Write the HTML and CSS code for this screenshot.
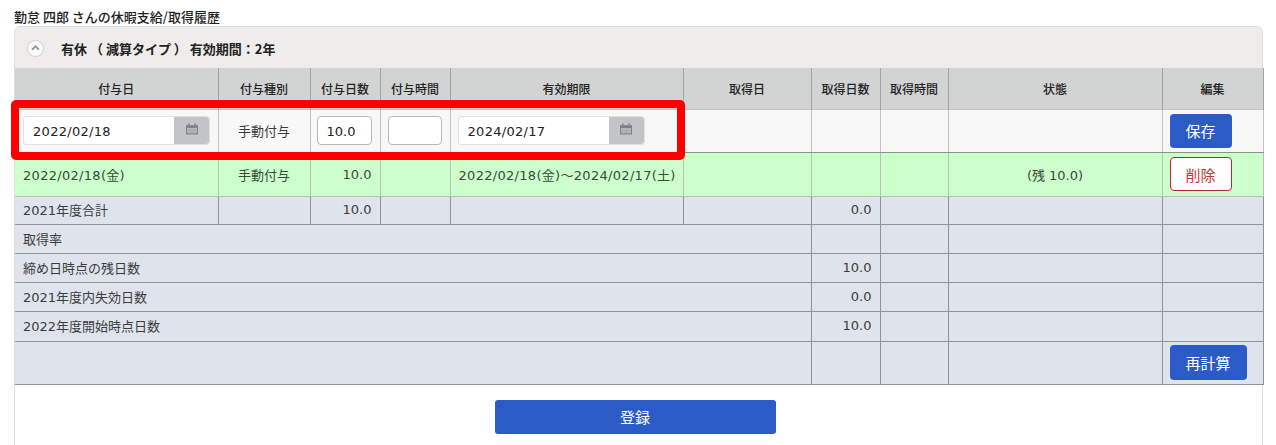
FILE: index.html
```html
<!DOCTYPE html>
<html lang="ja">
<head>
<meta charset="utf-8">
<title>休暇支給/取得履歴</title>
<link rel="stylesheet" href="styles.css">
</head>
<body>
<h1 class="page-title">勤怠 四郎 さんの休暇支給/取得履歴</h1>
<section class="panel">
  <header class="panel-head">
    <span class="toggle">
      <svg viewBox="0 0 16 16" width="16" height="16" aria-hidden="true"><path d="M4.3 9.8 8 6.3l3.7 3.5" fill="none" stroke="#8f8f8f" stroke-width="1.8"/></svg>
    </span>
    <span class="panel-title">有休 （ 減算タイプ ） 有効期間：2年</span>
  </header>
  <div class="table-wrap">
    <table class="grid">
      <colgroup>
        <col class="c1"><col class="c2"><col class="c3"><col class="c4"><col class="c5">
        <col class="c6"><col class="c7"><col class="c8"><col class="c9"><col class="c10">
      </colgroup>
      <thead>
        <tr>
          <th>付与日</th><th>付与種別</th><th>付与日数</th><th>付与時間</th><th>有効期限</th>
          <th>取得日</th><th>取得日数</th><th>取得時間</th><th>状態</th><th>編集</th>
        </tr>
      </thead>
      <tbody>
        <tr class="row-edit">
          <td class="cell-date">
            <div class="date-field"><span class="date-value">2022/02/18</span>
              <span class="date-btn"><svg viewBox="0 0 14 14" width="14" height="14" aria-hidden="true"><path d="M1 3.2h12v9.3H1z" fill="#7f8285"/><path d="M3 1.6h1.6v2H3zM9.4 1.6H11v2H9.4z" fill="#7f8285"/><path d="M2.2 6h9.6v5.3H2.2z" fill="#c2c4c6"/><path d="M3 7h8M3 8.6h8M3 10.2h8" stroke="#8e9093" stroke-width=".6"/></svg></span>
            </div>
          </td>
          <td class="center">手動付与</td>
          <td class="cell-input"><div class="num-field">10.0</div></td>
          <td class="cell-input"><div class="num-field"></div></td>
          <td class="cell-date">
            <div class="date-field"><span class="date-value">2024/02/17</span>
              <span class="date-btn"><svg viewBox="0 0 14 14" width="14" height="14" aria-hidden="true"><path d="M1 3.2h12v9.3H1z" fill="#7f8285"/><path d="M3 1.6h1.6v2H3zM9.4 1.6H11v2H9.4z" fill="#7f8285"/><path d="M2.2 6h9.6v5.3H2.2z" fill="#c2c4c6"/><path d="M3 7h8M3 8.6h8M3 10.2h8" stroke="#8e9093" stroke-width=".6"/></svg></span>
            </div>
          </td>
          <td></td><td></td><td></td><td></td>
          <td class="cell-btn"><button class="btn btn-primary btn-save" type="button">保存</button></td>
        </tr>
        <tr class="row-grant">
          <td class="dt">2022/02/18(金)</td><td class="center">手動付与</td><td class="num">10.0</td><td></td>
          <td class="dt">2022/02/18(金)～2024/02/17(土)</td><td></td><td></td><td></td>
          <td class="center">(残 10.0)</td>
          <td class="cell-btn"><button class="btn btn-danger" type="button">削除</button></td>
        </tr>
        <tr class="row-sum row-total">
          <td>2021年度合計</td><td></td><td class="num">10.0</td><td></td><td></td><td></td>
          <td class="num">0.0</td><td></td><td></td><td></td>
        </tr>
        <tr class="row-sum">
          <td colspan="6">取得率</td><td></td><td></td><td></td><td></td>
        </tr>
        <tr class="row-sum">
          <td colspan="6">締め日時点の残日数</td><td class="num">10.0</td><td></td><td></td><td></td>
        </tr>
        <tr class="row-sum">
          <td colspan="6">2021年度内失効日数</td><td class="num">0.0</td><td></td><td></td><td></td>
        </tr>
        <tr class="row-sum row-start">
          <td colspan="6">2022年度開始時点日数</td><td class="num">10.0</td><td></td><td></td><td></td>
        </tr>
        <tr class="row-sum row-last">
          <td colspan="6"></td><td></td><td></td><td></td>
          <td class="cell-btn"><button class="btn btn-primary btn-calc" type="button">再計算</button></td>
        </tr>
      </tbody>
    </table>
    <div class="highlight"></div>
  </div>
  <div class="actions"><button class="btn btn-primary btn-submit" type="button">登録</button></div>
</section>
</body>
</html>
```
FILE: styles.css
```css
* { box-sizing: border-box; }
html, body { margin: 0; height: 445px; overflow: hidden; background: #fff; }
body {
  padding: 9px 13px 0 14px;
  font-family: "DejaVu Sans", "Noto Sans CJK JP", sans-serif;
  font-size: 13px;
  color: #3c3c3c;
}
.page-title {
  margin: 0 0 2px;
  height: 15px;
  font-size: 13px;
  line-height: 15px;
  font-weight: 500;
  color: #222;
  font-family: "Noto Sans CJK JP", sans-serif;
}
.panel {
  border: 1px solid #dedede;
  border-radius: 6px 6px 0 0;
  height: 425px;
}
.panel-head {
  display: flex;
  align-items: center;
  height: 41px;
  padding: 1px 0 0 12px;
  background: #eeedec;
  border-radius: 5px 5px 0 0;
}
.toggle {
  display: flex;
  width: 17px;
  height: 17px;
  border-radius: 50%;
  background: #fafafa;
  border: 1px solid #d0d0d0;
  align-items: center;
  justify-content: center;
}
.panel-title {
  margin-left: 17px;
  font-size: 13px;
  font-weight: 700;
  color: #222;
  font-family: "Noto Sans CJK JP", sans-serif;
  white-space: pre;
}
.table-wrap { position: relative; }
.grid {
  width: 1248px;
  border-collapse: collapse;
  table-layout: fixed;
}
.c1 { width: 203px; }
.c2 { width: 92px; }
.c3 { width: 70px; }
.c4 { width: 70px; }
.c5 { width: 233px; }
.c6 { width: 128px; }
.c7 { width: 69px; }
.c8 { width: 68px; }
.c9 { width: 214px; }
.c10 { width: 101px; }
.grid th {
  height: 41px;
  padding: 0;
  background: #d2d4d4;
  border-left: 1px solid #a4a6a6;
  border-right: 1px solid #a4a6a6;
  font-family: "Noto Sans CJK JP", sans-serif;
  font-size: 12px;
  font-weight: 500;
  color: #222;
}
.grid th:first-child, .grid td:first-child { border-left: 0; }
.grid td {
  padding: 0 8px;
  border: 1px solid #909396;
  white-space: nowrap;
}
.center { text-align: center; }
.grid .num { text-align: right; }
.dt { letter-spacing: .3px; }
.row-edit td { height: 43px; background: #f8f8f8; border-color: #c2c2c2; border-bottom-color: #7f9a7f; }
.grid .cell-date { padding: 0 7px; }
.grid .cell-date:first-child { padding-left: 8px; }
.grid .cell-input { padding: 0 6px; }
.grid .cell-input + .cell-input { padding-left: 7px; }
.row-grant td { height: 44px; background: #ccffcc; border-color: #b4c4b4; color: #3a4a3a; }
.grid .row-sum td { height: 29px; padding-bottom: 1px; background: #dfe4ec; }
.grid .row-total td { height: 28px; }
.grid .row-start td { height: 30px; }
.grid .row-last td { height: 43px; padding-bottom: 0; }
.date-field {
  display: flex;
  width: 187px;
  height: 29px;
  border: 1px solid #e2e2e2;
  border-radius: 3px;
  background: #fff;
}
.date-value {
  flex: 1;
  padding-left: 9px;
  line-height: 30px;
  letter-spacing: .3px;
  color: #222;
}
.date-btn {
  display: flex;
  align-items: center;
  justify-content: center;
  width: 35px;
  background: #c2c4c6;
  border-radius: 0 3px 3px 0;
  padding-bottom: 4px;
}
.num-field {
  width: 55px;
  height: 29px;
  padding-left: 9px;
  border: 1px solid #b8b8b8;
  border-radius: 4px;
  background: #fff;
  line-height: 30px;
  color: #222;
}
.cell-input + .cell-input .num-field { width: 54px; }
.grid .cell-btn { padding: 0 7px; vertical-align: middle; }
.btn {
  display: block;
  border: 0;
  border-radius: 4px;
  font-family: "Noto Sans CJK JP", sans-serif;
  font-size: 15px;
  padding: 0;
}
.btn-primary { background: #2a5bc7; color: #fff; }
.btn-save { width: 62px; height: 34px; }
.btn-calc { width: 77px; height: 35px; }
.btn-danger { width: 62px; height: 34px; background: #fff; border: 1px solid #b22a2a; color: #c8343c; }
.highlight {
  position: absolute;
  left: -4px;
  top: 32px;
  width: 674px;
  height: 60px;
  border: 8px solid #ff0000;
  border-radius: 5px;
  pointer-events: none;
}
.actions {
  display: flex;
  justify-content: center;
  padding-top: 15px;
  padding-right: 7px;
}
.btn-submit { width: 281px; height: 34px; border-radius: 3px; }
```
